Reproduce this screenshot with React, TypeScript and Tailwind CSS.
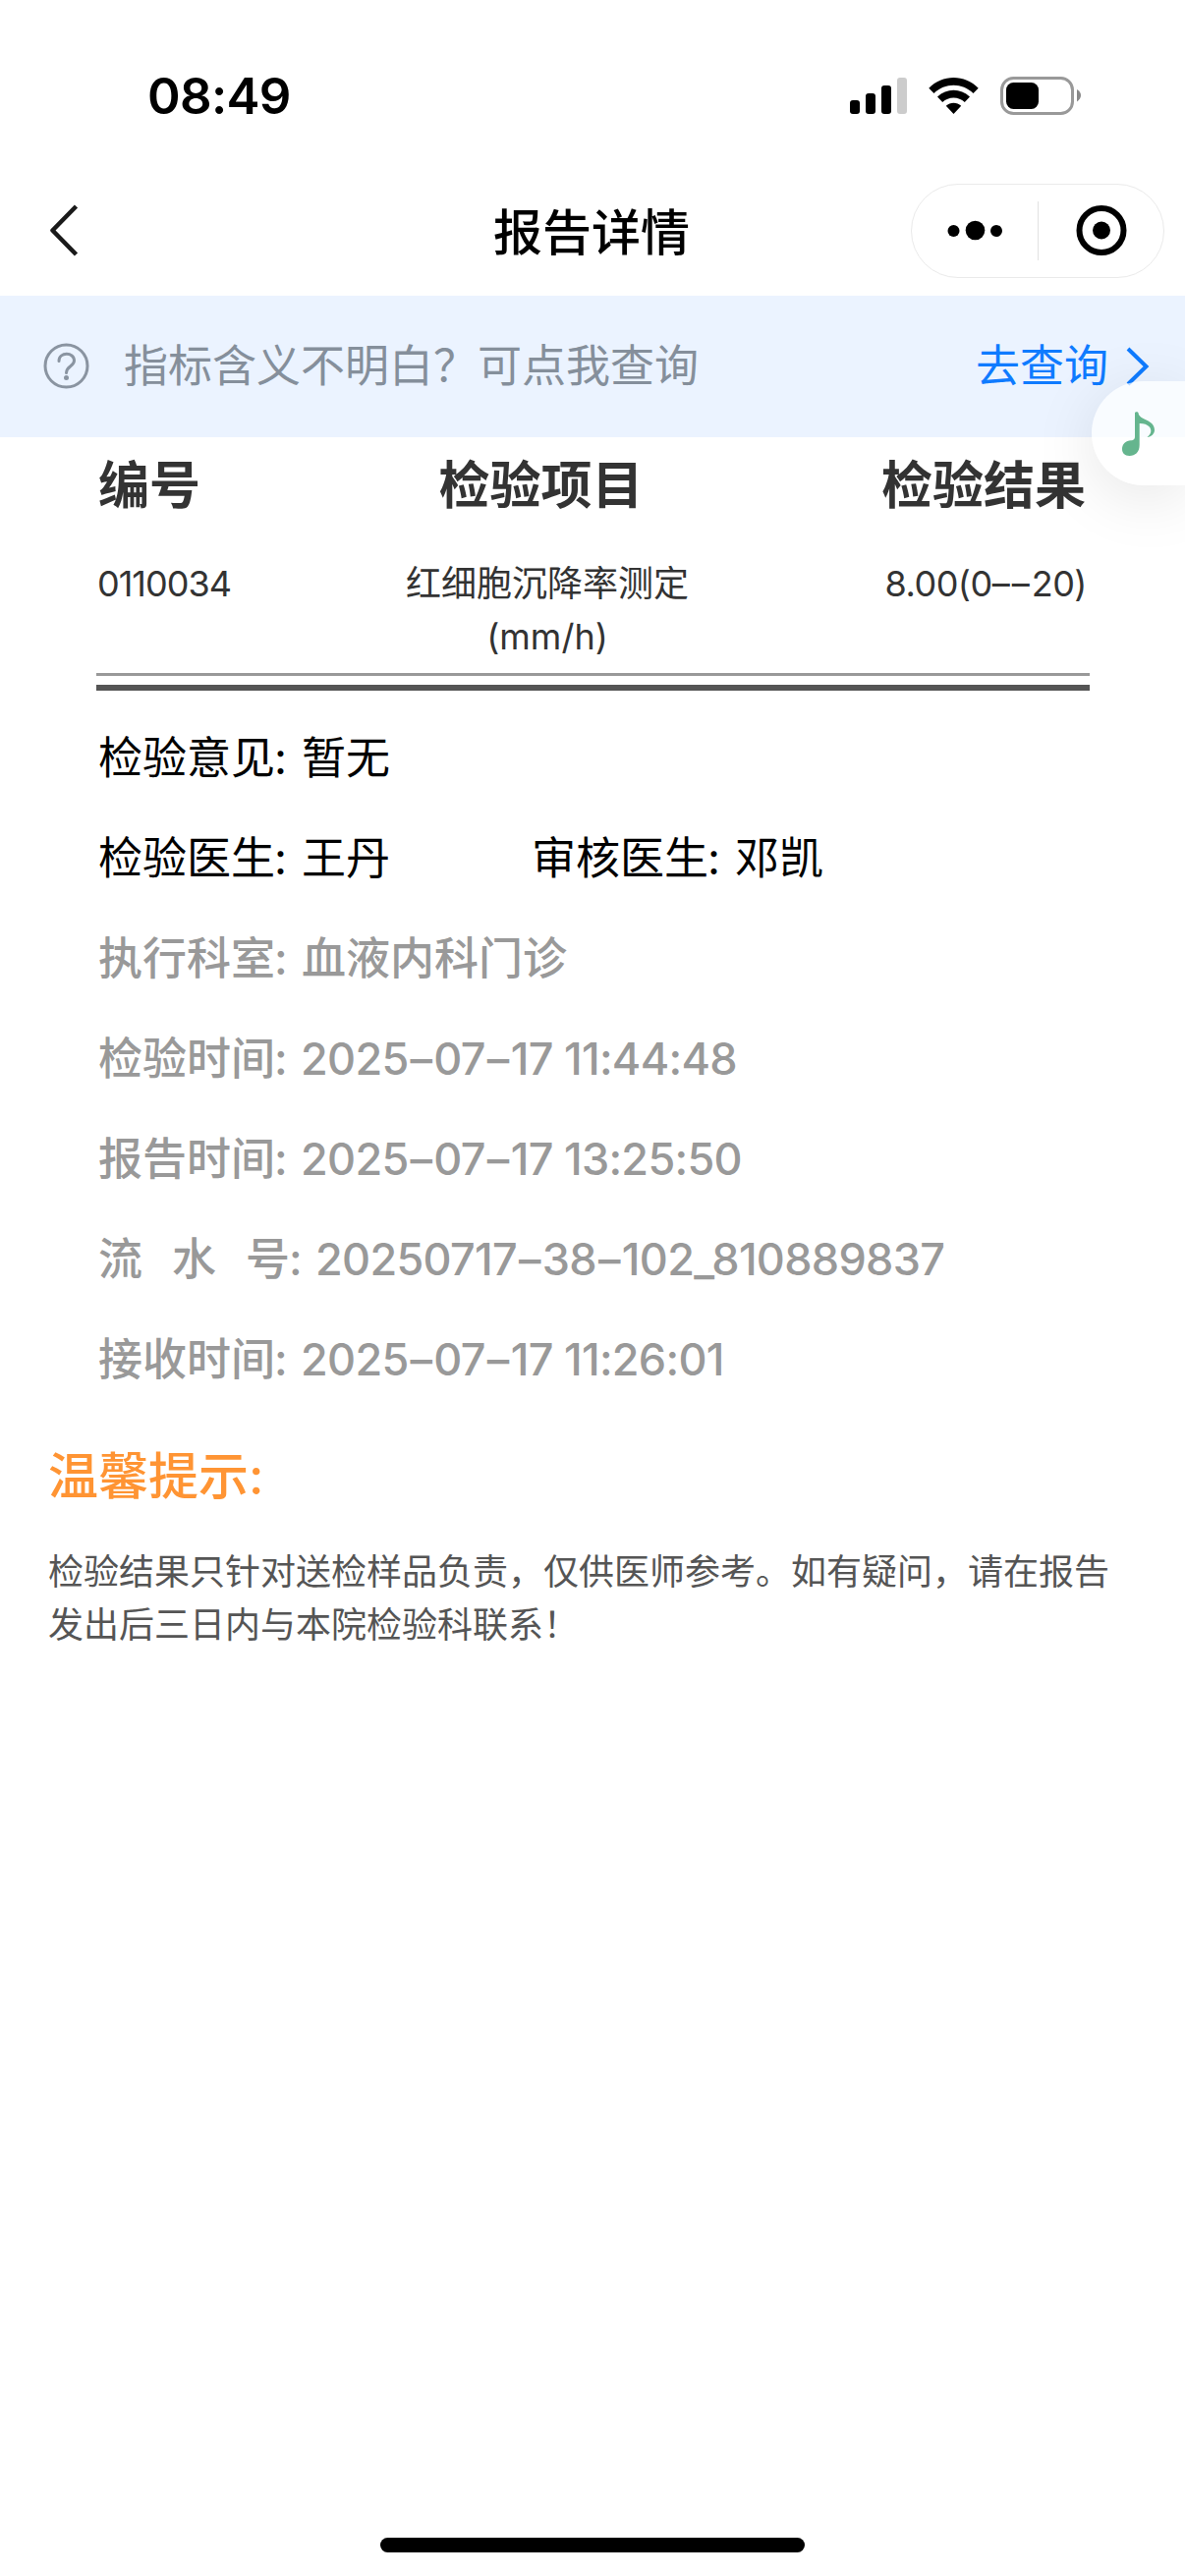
import React from 'react';

interface InfoRowProps {
  label: string;
  value: string;
  muted?: boolean;
  spread?: boolean;
}

const details = [
  { label: '执行科室', value: '血液内科门诊' },
  { label: '检验时间', value: '2025–07–17 11:44:48' },
  { label: '报告时间', value: '2025–07–17 13:25:50' },
  { label: '流水号', value: '20250717–38–102_810889837', spread: true },
  { label: '接收时间', value: '2025–07–17 11:26:01' },
];

const InfoRow: React.FC<InfoRowProps> = ({ label, value, muted, spread }) => (
  <div className={muted ? 'flex h-[102px] items-center font-medium text-[#999]' : 'flex h-[102px] items-center text-black'}>
    {spread ? (
      <span className="flex gap-[30px]">
        {label.split('').map((char) => (
          <span key={char}>{char}</span>
        ))}
      </span>
    ) : (
      <span>{label}</span>
    )}
    <span className="-ml-px w-[28px]">:</span>
    <span className={/\d/.test(value) ? '-ml-px tracking-[-0.7px]' : ''}>
      {value.split('–').map((part, i) => (
        <React.Fragment key={i}>
          {i > 0 && <span className="mx-[2px]">–</span>}
          {part}
        </React.Fragment>
      ))}
    </span>
  </div>
);

const StatusBar = () => (
  <header className="flex h-[160px] justify-between pt-[78px] pr-[106px] pl-[150px]">
    <span className="h-[40px] text-[51px] leading-[40px] font-semibold tracking-[-0.7px]">08:49</span>
    <div className="flex h-[40px]">
      <svg width="58" height="40" viewBox="0 0 58 40">
        <rect x="0" y="24" width="10" height="14" rx="3" />
        <rect x="16" y="17" width="10" height="21" rx="3" />
        <rect x="32" y="9" width="10" height="29" rx="3" />
        <rect x="48" y="1" width="10" height="37" rx="3" fill="#ccc" />
      </svg>
      <svg className="ml-[22px]" width="51" height="40" viewBox="0 0 51 40">
        <path d="M.3 11.7C14-2.5 37-2.5 50.7 11.7L45.5 17C34.5 6 16.5 6 5.5 17Z" />
        <path d="M9 20.5C18.5 11.4 32.5 11.4 42 20.5L36.8 26C30.5 20 20.5 20 14.2 26Z" />
        <path d="M17.8 29.7C22 25.8 29 25.8 33.2 29.7L25.5 38Z" />
      </svg>
      <svg className="ml-[22px]" width="82" height="40" viewBox="0 0 82 40">
        <rect x="1.5" y="1.5" width="72" height="36" rx="12" fill="none" stroke="#999" strokeWidth="3" />
        <rect x="6" y="6" width="33" height="27" rx="7.5" />
        <path d="M78 13Q82 15.5 82 19T78 25.5Z" fill="#888" />
      </svg>
    </div>
  </header>
);

const NavBar = () => (
  <nav className="grid h-[141px] grid-cols-3 items-center pt-[7px] pr-[21px] pb-px pl-[48px]">
    <svg width="36" height="56" viewBox="0 0 36 56" fill="none" stroke="#1a1a1a" strokeWidth="4.5">
      <path d="M29.5 4L5.5 28.5L29.5 53" strokeLinejoin="round" />
    </svg>
    <h1 className="-ml-[29px] pt-[6px] text-center text-[50px] leading-[60px] font-medium">报告详情</h1>
    <div className="mt-[2px] flex h-[96px] w-[258px] items-center justify-self-end rounded-full border border-[#eaeaea]">
      <svg width="256" height="94" viewBox="0 0 256 94">
        <circle cx="42.5" cy="47" r="6" />
        <circle cx="64.5" cy="46.5" r="9.8" />
        <circle cx="86" cy="47" r="6" />
        <path d="M128.5 17V77" stroke="#e2e2e2" />
        <circle cx="193" cy="46.5" r="22.5" fill="none" stroke="#000" strokeWidth="6" />
        <circle cx="193" cy="46.5" r="9" />
      </svg>
    </div>
  </nav>
);

const QueryBanner = () => (
  <section className="relative flex h-[144px] items-center bg-[#ebf3ff] pr-[34px] pb-px pl-[44px] text-[45px]">
    <svg width="47" height="47" viewBox="0 0 47 47" fill="none" stroke="#8a94a1" strokeWidth="3">
      <circle cx="23.5" cy="23.5" r="21.5" />
      <path d="M16 18.5C16 9 31.5 9 31.5 18C31.5 24 23.5 23.5 23.5 30.5" strokeLinecap="round" />
      <circle cx="23.5" cy="35.5" r="1" fill="#8a94a1" />
    </svg>
    <span className="ml-[35px] leading-[60px] text-[#858f9b]">指标含义不明白？可点我查询</span>
    <span className="ml-auto leading-[60px] text-[#0f7bff]">去查询</span>
    <svg className="ml-[16px]" width="28" height="40" viewBox="0 0 28 40" fill="none" stroke="#0f7bff" strokeWidth="4">
      <path d="M4 2L22.5 20L4 38" />
    </svg>

    {/* music player handle stuck to the screen edge */}
    <button className="absolute top-[87px] right-0 flex h-[106px] w-[95px] items-center rounded-l-full bg-white/70 pl-[29px] shadow-[0_12px_64px_rgba(0,0,0,0.1)]">
      <svg width="38" height="48" viewBox="0 0 38 48" fill="#65b58e">
        <path d="M15 3.5C15 1.8 18.5 1.8 18.6 3.5C19 10.5 35.5 10 35 21C34.8 24.5 32 27.5 27.5 28C31.5 25 32.5 21 29.8 17.5C27.5 14.7 23 13.8 19.7 14V36C19.7 43 15.5 47 9.5 47C4.5 47 2 44 2 40C2 35 6 31.5 11 31.3C14 31 15 30 15 27Z" />
      </svg>
    </button>
  </section>
);

const ResultTable = () => (
  <section className="mr-[97px] ml-[98px] text-[#333]">
    <div className="flex justify-between pt-[16px] pr-[4px] pl-[2px] text-[52px] leading-[68px] font-bold">
      <span>编号</span>
      <span>检验项目</span>
      <span>检验结果</span>
    </div>
    <div className="flex h-[156px] px-px pt-[38px] text-[36px] leading-[54px]">
      <span className="w-[261px] tracking-[-1px]">0110034</span>
      <span className="w-[394px] text-center">
        红细胞沉降率测定
        <br />
        (mm/h)
      </span>
      <span className="flex-1 pr-[2px] text-right whitespace-nowrap tracking-[-0.5px]">
        8.00(0<span className="tracking-[2px]">––</span>20)
      </span>
    </div>
    <div className="h-[18px] border-t-[3px] border-b-[6px] border-t-[#999] border-b-[#555]" />
  </section>
);

export default function App() {
  return (
    <div className="flex h-[2622px] w-[1206px] flex-col overflow-hidden bg-white font-['Inter','Noto_Sans_CJK_SC',sans-serif] text-black">
      <StatusBar />
      <NavBar />
      <QueryBanner />
      <ResultTable />

      <section className="px-[100px] pt-[18px] text-[45px] leading-[60px]">
        <InfoRow label="检验意见" value="暂无" />
        <div className="flex">
          <div className="w-[441px]">
            <InfoRow label="检验医生" value="王丹" />
          </div>
          <InfoRow label="审核医生" value="邓凯" />
        </div>
        {details.map((item) => (
          <InfoRow key={item.label} {...item} muted />
        ))}
      </section>

      <section className="pt-[33px] pr-[60px] pl-[49px]">
        <h2 className="text-[51px] leading-[70px] font-medium text-[#ff9433]">温馨提示:</h2>
        <p className="mt-[35px] w-[1090px] text-[36px] leading-[54px] text-[#555]">
          检验结果只针对送检样品负责，仅供医师参考。如有疑问，请在报告发出后三日内与本院检验科联系！
        </p>
      </section>

      <div className="mt-auto mb-[24px] h-[15px] w-[432px] self-center rounded-full bg-black" />
    </div>
  );
}
